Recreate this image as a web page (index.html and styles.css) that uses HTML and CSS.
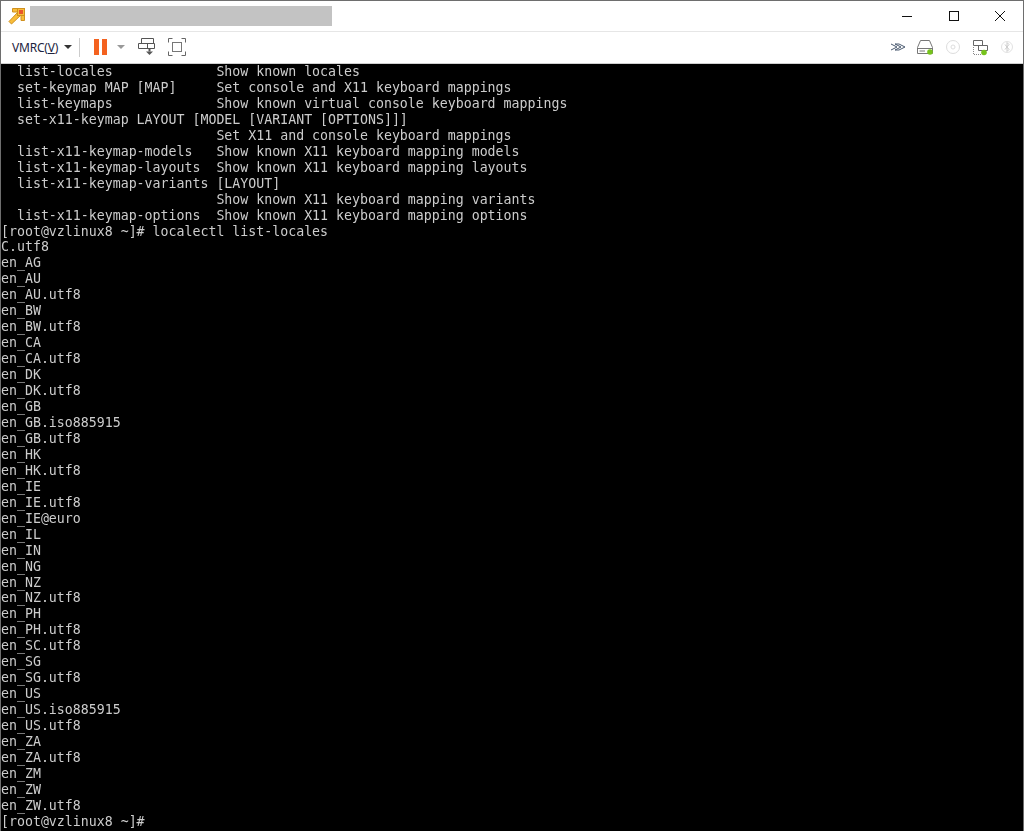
FILE: index.html
```html
<!DOCTYPE html>
<html lang="en">
<head>
<meta charset="utf-8">
<title>VMRC</title>
<link rel="stylesheet" href="styles.css">
</head>
<body>
<div class="window">
  <header class="titlebar">
    <svg class="app-icon" width="18" height="18" viewBox="0 0 18 18">
      <path d="M4.500 1.500H16.500V13.500H13V8L3.500 17 1 14.500 10 5H4.500Z" fill="#f8bd3a" stroke="#d0901e" stroke-width="1"/>
      <rect x="9.500" y="1.500" width="7" height="7" fill="#f8bd3a" stroke="#d0901e"/>
      <rect x="11" y="3" width="4" height="4" fill="#e8562a"/>
    </svg>
    <div class="title-redacted"></div>
    <div class="win-controls">
      <svg class="win-btn" width="46" height="30" viewBox="0 0 46 30"><path d="M17 15.500H27" stroke="#111" fill="none"/></svg>
      <svg class="win-btn" width="46" height="30" viewBox="0 0 46 30"><rect x="18.500" y="10.500" width="9" height="9" stroke="#111" fill="none"/></svg>
      <svg class="win-btn" width="46" height="30" viewBox="0 0 46 30"><path d="M18 10L28 20M28 10L18 20" stroke="#111" fill="none"/></svg>
    </div>
  </header>
  <nav class="toolbar">
    <span class="menu-label">VMRC(<u>V</u>)</span>
    <span class="caret dark"></span>
    <span class="divider"></span>
    <span class="pause"><i></i><i></i></span>
    <span class="caret light"></span>
    <svg class="tool" width="18" height="18" viewBox="0 0 18 18">
      <path d="M3.500 0.500H15.500V5.500H3.500ZM0.500 5.500H16.500V10.500H0.500ZM9.500 5.500V10.500" fill="none" stroke="#555"/>
      <path d="M11.500 11V13.500" stroke="#555" stroke-width="2" fill="none"/>
      <path d="M8 13.500H15L11.500 17Z" fill="#555"/>
    </svg>
    <svg class="tool" width="20" height="20" viewBox="0 0 20 20">
      <path d="M1.500 5.500V1.500H5.500M14.500 1.500H18.500V5.500M18.500 14.500V18.500H14.500M5.500 18.500H1.500V14.500" fill="none" stroke="#666"/>
      <rect x="5.500" y="5.500" width="9" height="9" fill="none" stroke="#777"/>
    </svg>
    <div class="status">
      <svg width="16" height="10" viewBox="0 0 16 10"><path d="M1 2L7 5 1 8M5 2H9L15 5 9 8H5L11 5Z" fill="none" stroke="#4a5a70"/></svg>
      <svg width="18" height="16" viewBox="0 0 18 16"><path d="M4.500 1.500H13.500L16.500 8.500V14.500H1.500V8.500ZM1.500 9.500H16.500M3.500 12H9" fill="none" stroke="#777"/><circle cx="14" cy="13" r="2.800" fill="#76c21c"/></svg>
      <svg width="16" height="16" viewBox="0 0 16 16"><circle cx="8" cy="8" r="6.500" fill="none" stroke="#ddd"/><circle cx="8" cy="8" r="2" fill="none" stroke="#ddd"/></svg>
      <svg width="17" height="17" viewBox="0 0 17 17"><path d="M1.500 1.500H10.500V6.500H1.500ZM6.500 6.500H15.500V11.500H6.500Z" fill="none" stroke="#666"/><path d="M1.500 8V15.500H10" fill="none" stroke="#888" stroke-dasharray="1 1"/><circle cx="12" cy="13.500" r="2.800" fill="#76c21c"/></svg>
      <svg width="14" height="16" viewBox="0 0 14 16"><circle cx="7" cy="8" r="5.500" fill="none" stroke="#e2e2e2"/><path d="M5 5.500L9 10.500 7 12.500V3.500L9 5.500 5 10.500" fill="none" stroke="#ccc"/></svg>
    </div>
  </nav>
  <pre class="console">  list-locales             Show known locales
  set-keymap MAP [MAP]     Set console and X11 keyboard mappings
  list-keymaps             Show known virtual console keyboard mappings
  set-x11-keymap LAYOUT [MODEL [VARIANT [OPTIONS]]]
                           Set X11 and console keyboard mappings
  list-x11-keymap-models   Show known X11 keyboard mapping models
  list-x11-keymap-layouts  Show known X11 keyboard mapping layouts
  list-x11-keymap-variants [LAYOUT]
                           Show known X11 keyboard mapping variants
  list-x11-keymap-options  Show known X11 keyboard mapping options
[root@vzlinux8 ~]# localectl list-locales
C.utf8
en_AG
en_AU
en_AU.utf8
en_BW
en_BW.utf8
en_CA
en_CA.utf8
en_DK
en_DK.utf8
en_GB
en_GB.iso885915
en_GB.utf8
en_HK
en_HK.utf8
en_IE
en_IE.utf8
en_IE@euro
en_IL
en_IN
en_NG
en_NZ
en_NZ.utf8
en_PH
en_PH.utf8
en_SC.utf8
en_SG
en_SG.utf8
en_US
en_US.iso885915
en_US.utf8
en_ZA
en_ZA.utf8
en_ZM
en_ZW
en_ZW.utf8
[root@vzlinux8 ~]#</pre>
</div>
</body>
</html>
```
FILE: styles.css
```css
html, body { margin: 0; padding: 0; height: 100%; background: #000; overflow: hidden; }
.window {
  width: 1024px; height: 831px; box-sizing: border-box;
  display: flex; flex-direction: column;
  border-top: 1px solid #6e6e6e; border-left: 1px solid #6e6e6e; border-right: 1px solid #6e6e6e;
  font-family: "Noto Sans", "Liberation Sans", sans-serif;
}
.titlebar {
  height: 30px; flex: none; display: flex; align-items: center; background: #fff;
  padding-left: 7px;
}
.app-icon { flex: none; }
.title-redacted { width: 302px; height: 20px; margin-left: 4px; background: #c3c3c3; }
.win-controls { margin-left: auto; display: flex; }
.win-btn { display: block; }
.toolbar {
  height: 33px; flex: none; box-sizing: border-box; display: flex; align-items: center;
  background: #fff; border-top: 1px solid #e6e6e6; border-bottom: 1px solid #cfcfcf; padding: 0 0 1px 11px;
}
.menu-label { font-size: 12px; color: #1c2340; letter-spacing: -0.2px; }
.caret { width: 0; height: 0; border-left: 4px solid transparent; border-right: 4px solid transparent; }
.caret.dark { border-top: 4px solid #333; margin-left: 6px; }
.caret.light { border-top: 4px solid #999; margin-left: 10px; }
.divider { width: 1px; height: 19px; background: #ccc; margin-left: 7px; }
.pause { display: flex; gap: 3px; margin-left: 14px; }
.pause i { display: block; width: 5px; height: 16px; background: #f4621f; }
.tool { display: block; flex: none; }
.caret.light + .tool { margin-left: 13px; }
.tool + .tool { margin-left: 11px; }
.status { margin-left: auto; display: flex; align-items: center; gap: 11px; padding-right: 9px; }
.status svg { display: block; }
.status svg:first-child { margin-right: -1px; }
.console {
  flex: 1; min-height: 0; margin: 0; overflow: hidden; background: #000; color: #cccccc;
  font-family: "DejaVu Sans Mono", "Liberation Mono", monospace;
  font-size: 13.25px; line-height: 15.96px;
  filter: blur(0.35px);
}
```
